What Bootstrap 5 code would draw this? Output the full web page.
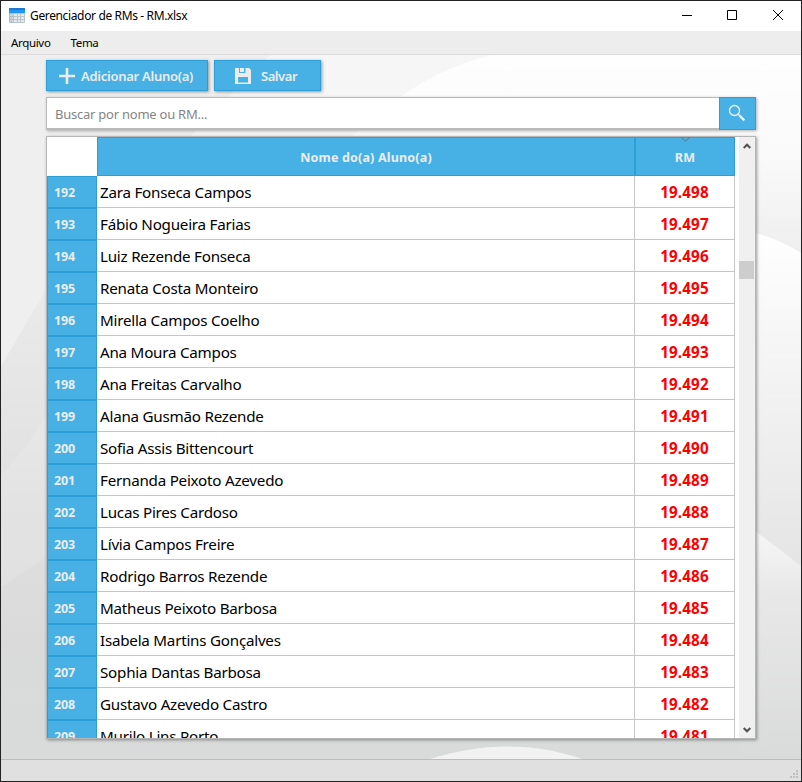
<!DOCTYPE html>
<html lang="pt-BR">
<head>
<meta charset="utf-8">
<meta name="viewport" content="width=device-width, initial-scale=1">
<title>Gerenciador de RMs - RM.xlsx</title>
<link href="https://cdn.jsdelivr.net/npm/bootstrap@5.3.0/dist/css/bootstrap.min.css" rel="stylesheet">
<style>
:root { --blue: #47b1e6; --edge: #2c9fd9; --ice: #ececec; }
body { font-family: "Noto Sans", "Open Sans", sans-serif; color: #000; }
.window { width: 802px; height: 782px; border: 1px solid #222124; }
.title-bar { height: 30px; font-size: 12px; padding-left: 8px; letter-spacing: -.36px; }
.title-bar .caption { margin-left: 5px; }
.win-controls { width: 138px; }
.menu-strip { height: 24px; background: #ededed; border-bottom: 1px solid #dcdcdc; font-size: 11.5px; padding-left: 10px; gap: 20px; letter-spacing: -.33px; }
.workspace { padding: 5px 45px 0; }
.backdrop { inset: 0; }
.tool-btn { --bs-btn-padding-y: 0; --bs-btn-bg: var(--blue); --bs-btn-border-color: var(--edge); --bs-btn-color: var(--ice); --bs-btn-hover-bg: var(--edge); --bs-btn-border-radius: 0; height: 31px; font-size: 13px; font-weight: 600; box-shadow: 1px 1px 3px rgba(0,0,0,.4); white-space: nowrap; }
.tool-row { gap: 6px; }
.tool-btn span { padding-top: 2px; }
.add-btn { width: 162px; padding-left: 12px; padding-right: 0; gap: 6px; letter-spacing: -.26px; }
.save-btn { width: 107px; padding-left: 20px; padding-right: 0; gap: 10px; letter-spacing: -.45px; }
.search-box { height: 33px; width: 710px; margin-top: 6px; box-shadow: 1px 1px 3px rgba(0,0,0,.3); }
.search-box .form-control { border: 1px solid #bababa; border-bottom-width: 2px; border-radius: 0; font-size: 13px; padding: 3px 8px 0; letter-spacing: -.24px; }
.search-box .form-control::placeholder { color: #858585; }
.search-box .btn { width: 37px; padding: 0 2px 1px 0; }
.search-box .tool-btn { height: 33px; box-shadow: none; }
.sheet { width: 710px; height: 603px; margin-top: 6px; border: 1px solid #b6b6b6; box-shadow: 1px 1px 3px rgba(0,0,0,.4); }
.grid-table { width: 688px; table-layout: fixed; border-collapse: separate; border-spacing: 0; }
.grid-table th { background: var(--blue); color: var(--ice); border: 1px solid var(--edge); font-size: 12.5px; font-weight: 700; padding: 0; }
.grid-table thead th { height: 39px; text-align: center; padding-top: 3px; letter-spacing: .18px; }
.grid-table thead .corner { background: #fff; border: 0; }
.grid-table tbody th { height: 32px; padding: 3px 0 0 6px; letter-spacing: -.1px; }
.grid-table td { height: 32px; padding: 0 0 0 3px; font-size: 15.2px; line-height: 20px; border: 0 solid #c6c6c6; border-width: 0 1px 1px 0; white-space: nowrap; letter-spacing: -.24px; }
.grid-table td.rm { color: #f00; font-weight: 700; text-align: center; padding-left: 0; letter-spacing: .15px; }
.sort-mark { top: -1px; left: 45px; }
.scroll-track { width: 16px; background: #f0f0f0; margin-left: 4px; padding: 6px 0 5px; }
.scroll-thumb { width: 15px; height: 18px; background: #cdcdcd; margin: 112px 1px 0 0; }
.scroll-track svg { margin-right: 1px; }
.status-strip { height: 22px; background: #e0e0e0; border-top: 1px solid #bdbdbd; }
</style>
</head>
<body>
<div class="window d-flex flex-column overflow-hidden">
  <header class="title-bar d-flex align-items-center bg-white flex-shrink-0">
    <svg width="16" height="16" viewBox="0 0 16 16">
      <rect y="0" width="16" height="15" rx="1" fill="#b8c5cd"/>
      <path d="M0 5V1q0-1 1-1h14q1 0 1 1v4z" fill="#2196f3"/><path d="M0 1q0-1 1-1h14q1 0 1 1v1H0z" fill="#1e78d2"/>
      <g fill="#e6eaec"><path d="M1 6h3v2H1zM5 6h3v2H5zM9 6h2v2H9zM12 6h3v2h-3zM1 9h3v2H1zM5 9h3v2H5zM9 9h2v2H9zM12 9h3v2h-3zM1 12h3v2H1zM5 12h3v2H5zM9 12h2v2H9zM12 12h3v2h-3z"/></g>
      <path d="M0 5h4v10H1l-1-1z" fill="#90a4ae" opacity=".3"/>
    </svg>
    <span class="caption">Gerenciador de RMs - RM.xlsx</span>
    <svg class="win-controls ms-auto" height="30" viewBox="0 0 138 30" fill="none" stroke="#000">
      <path d="M19 14.500h10M64.500 9.500h9v9h-9zM110 9l10 10M120 9l-10 10"/>
    </svg>
  </header>
  <nav class="menu-strip d-flex align-items-center flex-shrink-0"><span>Arquivo</span><span>Tema</span></nav>
  <main class="workspace flex-grow-1 position-relative overflow-hidden">
    <svg class="backdrop position-absolute" width="800" height="704" viewBox="0 0 800 704">
      <defs>
        <linearGradient id="leftTone" gradientUnits="userSpaceOnUse" x1="0" y1="235" x2="0" y2="704"><stop stop-color="#eaeaea"/><stop offset=".5" stop-color="#dfdfdf"/><stop offset=".75" stop-color="#dadada"/><stop offset="1" stop-color="#d9dbda"/></linearGradient>
        <linearGradient id="topRight" gradientUnits="userSpaceOnUse" x1="0" y1="0" x2="0" y2="200"><stop stop-color="#fefefe"/><stop offset=".5" stop-color="#fafafa"/><stop offset="1" stop-color="#eeeeee"/></linearGradient>
        <linearGradient id="mid" x2="0" y2="1"><stop stop-color="#fff"/><stop offset=".35" stop-color="#f5f5f5"/><stop offset="1" stop-color="#e4e4e4"/></linearGradient>
        <linearGradient id="low" x2="0" y2="1"><stop stop-color="#f9f9f9"/><stop offset=".3" stop-color="#e8e8e8"/><stop offset="1" stop-color="#d9dbda"/></linearGradient>
      </defs>
      <path d="M0 0h800v704H0z" fill="#efefef"/>
      <path d="M0 311 46 233H800V704H0z" fill="url(#leftTone)"/>
      <path d="M0 421Q25 395 46 358V502L0 532z" fill="#fff" opacity=".12"/>
      <path d="M270 0Q250 14 228 42L185 86H800V0z" fill="#f6f6f6"/>
      <path d="M398 43Q437 14 490 0H800V210L740 190V90H340z" fill="url(#topRight)"/>
      <path d="M740 174Q775 182 800 198V520L740 470z" fill="url(#mid)"/>
      <path d="M740 465 800 511V704H740z" fill="url(#low)"/>
      <path d="M429 704C482 688 530 687 581 704z" fill="#f2f2f2"/>
    </svg>
    <div class="position-relative">
      <div class="tool-row d-flex">
        <button class="btn tool-btn add-btn d-flex align-items-center">
          <svg width="16" height="16" viewBox="0 0 16 16" fill="#ececec"><path d="M6.700 0h2.600v6.700H16v2.600H9.300V16H6.700V9.300H0V6.700h6.700z"/></svg>
          <span>Adicionar Aluno(a)</span>
        </button>
        <button class="btn tool-btn save-btn d-flex align-items-center">
          <svg width="16" height="16" viewBox="0 0 16 16"><path d="M0 0h4v5h8V0h2l2 2v14H0zM5 0h4v4H5zM10.500 0H12v5h-1.500z" fill="#ececec"/><path d="M3 9h10v5.500H3z" fill="#47b1e6"/></svg>
          <span>Salvar</span>
        </button>
      </div>
      <div class="search-box input-group flex-nowrap">
        <input class="form-control" placeholder="Buscar por nome ou RM..." aria-label="Buscar">
        <button class="btn tool-btn d-flex align-items-center justify-content-center" aria-label="Pesquisar">
          <svg width="18" height="18" viewBox="0 0 18 18" fill="none" stroke="#f2f2f2"><circle cx="6.500" cy="6.500" r="5" stroke-width="1.300"/><path d="m10 10 2 2" stroke-width="1.300"/><path d="m11.500 11.500 4.800 4.800" stroke-width="2.400"/></svg>
        </button>
      </div>
      <section class="sheet d-flex bg-white overflow-hidden">
        <table class="grid-table flex-shrink-0 align-self-start">
          <colgroup><col style="width:50px"><col style="width:538px"><col style="width:100px"></colgroup>
          <thead><tr><th class="corner"></th><th>Nome do(a) Aluno(a)</th><th class="position-relative">RM<svg class="sort-mark position-absolute" width="9" height="5" viewBox="0 0 9 5" fill="none" stroke="#52758a"><path d="m.5.500 4 3.500 4-3.500"/></svg></th></tr></thead>
          <tbody id="rows"></tbody>
        </table>
        <div class="scroll-track d-flex flex-column align-items-center flex-shrink-0">
          <svg width="8" height="6" viewBox="0 0 8 6" fill="none" stroke="#505050" stroke-width="2"><path d="m.7 5 3.300-3.300L7.300 5"/></svg>
          <div class="scroll-thumb"></div>
          <svg class="mt-auto" width="8" height="6" viewBox="0 0 8 6" fill="none" stroke="#505050" stroke-width="2"><path d="m.7 1 3.300 3.300L7.300 1"/></svg>
        </div>
      </section>
    </div>
  </main>
  <footer class="status-strip d-flex justify-content-end align-items-end flex-shrink-0">
    <svg width="12" height="11" viewBox="0 0 12 11" fill="#bfbfbf"><path d="M7 0h2v2H7zM4 3h2v2H4zM7 3h2v2H7zM1 6h2v2H1zM4 6h2v2H4zM7 6h2v2H7z"/></svg>
  </footer>
</div>
<script>
const names = ["Zara Fonseca Campos","Fábio Nogueira Farias","Luiz Rezende Fonseca","Renata Costa Monteiro","Mirella Campos Coelho","Ana Moura Campos","Ana Freitas Carvalho","Alana Gusmão Rezende","Sofia Assis Bittencourt","Fernanda Peixoto Azevedo","Lucas Pires Cardoso","Lívia Campos Freire","Rodrigo Barros Rezende","Matheus Peixoto Barbosa","Isabela Martins Gonçalves","Sophia Dantas Barbosa","Gustavo Azevedo Castro","Murilo Lins Porto"];
document.getElementById("rows").innerHTML = names.map((name, i) =>
  `<tr><th>${192 + i}</th><td>${name}</td><td class="rm">19.${498 - i}</td></tr>`).join("");
</script>
<script src="https://cdn.jsdelivr.net/npm/bootstrap@5.3.0/dist/js/bootstrap.bundle.min.js"></script>
</body>
</html>
